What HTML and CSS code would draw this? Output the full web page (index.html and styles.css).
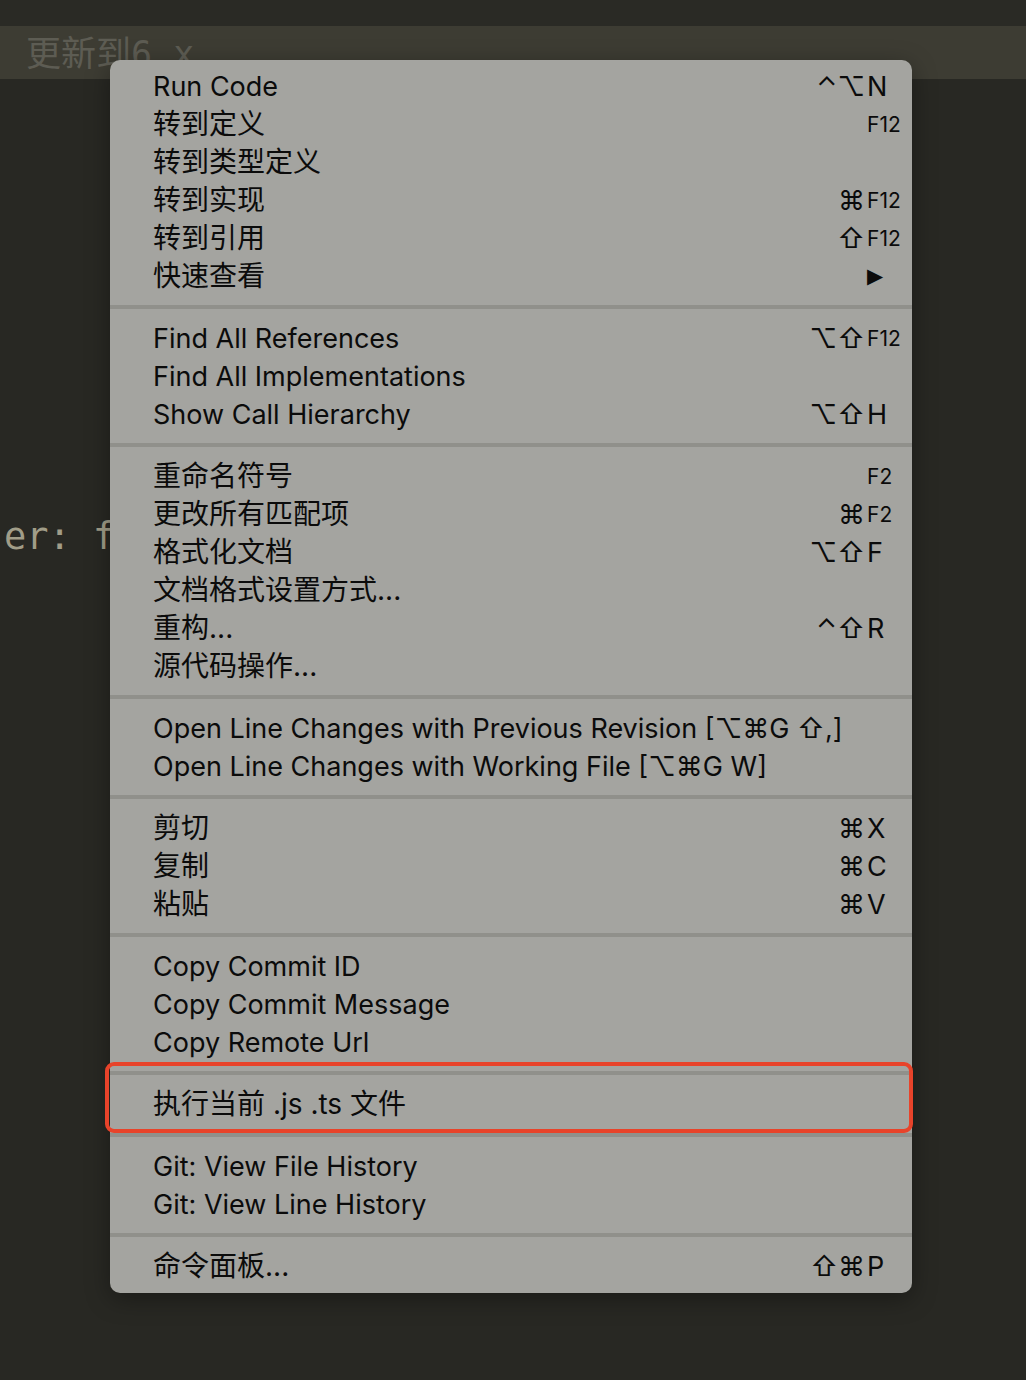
FILE: index.html
```html
<!DOCTYPE html>
<html lang="zh-CN">
<head>
<meta charset="utf-8">
<title>Context menu</title>
<link rel="stylesheet" href="styles.css">
</head>
<body>
<div class="editor">
  <div class="topstrip"></div>
  <div class="line-hl"><span class="ghost">更新到<span class="mono">6.x</span></span></div>
  <div class="gap"></div>
  <div class="code">er: f</div>
</div>

<div class="menu">
  <div class="section">
    <div class="item"><span class="label">Run Code</span><span class="sc"><span class="mods">⌃⌥</span><span class="key">N</span></span></div>
    <div class="item"><span class="label zh">转到定义</span><span class="sc"><span class="mods"></span><span class="key small">F12</span></span></div>
    <div class="item"><span class="label zh">转到类型定义</span></div>
    <div class="item"><span class="label zh">转到实现</span><span class="sc"><span class="mods">⌘</span><span class="key small">F12</span></span></div>
    <div class="item"><span class="label zh">转到引用</span><span class="sc"><span class="mods">⇧</span><span class="key small">F12</span></span></div>
    <div class="item"><span class="label zh">快速查看</span><span class="sc"><span class="mods"></span><span class="key arrow">▶</span></span></div>
  </div>
  <div class="sep"></div>
  <div class="section">
    <div class="item"><span class="label">Find All References</span><span class="sc"><span class="mods">⌥⇧</span><span class="key small">F12</span></span></div>
    <div class="item"><span class="label">Find All Implementations</span></div>
    <div class="item"><span class="label">Show Call Hierarchy</span><span class="sc"><span class="mods">⌥⇧</span><span class="key">H</span></span></div>
  </div>
  <div class="sep"></div>
  <div class="section">
    <div class="item"><span class="label zh">重命名符号</span><span class="sc"><span class="mods"></span><span class="key small">F2</span></span></div>
    <div class="item"><span class="label zh">更改所有匹配项</span><span class="sc"><span class="mods">⌘</span><span class="key small">F2</span></span></div>
    <div class="item"><span class="label zh">格式化文档</span><span class="sc"><span class="mods">⌥⇧</span><span class="key">F</span></span></div>
    <div class="item"><span class="label zh">文档格式设置方式...</span></div>
    <div class="item"><span class="label zh">重构...</span><span class="sc"><span class="mods">⌃⇧</span><span class="key">R</span></span></div>
    <div class="item"><span class="label zh">源代码操作...</span></div>
  </div>
  <div class="sep"></div>
  <div class="section">
    <div class="item"><span class="label">Open Line Changes with Previous Revision [⌥⌘G ⇧,]</span></div>
    <div class="item"><span class="label">Open Line Changes with Working File [⌥⌘G W]</span></div>
  </div>
  <div class="sep"></div>
  <div class="section">
    <div class="item"><span class="label zh">剪切</span><span class="sc"><span class="mods">⌘</span><span class="key">X</span></span></div>
    <div class="item"><span class="label zh">复制</span><span class="sc"><span class="mods">⌘</span><span class="key">C</span></span></div>
    <div class="item"><span class="label zh">粘贴</span><span class="sc"><span class="mods">⌘</span><span class="key">V</span></span></div>
  </div>
  <div class="sep"></div>
  <div class="section">
    <div class="item"><span class="label">Copy Commit ID</span></div>
    <div class="item"><span class="label">Copy Commit Message</span></div>
    <div class="item"><span class="label">Copy Remote Url</span></div>
  </div>
  <div class="sep"></div>
  <div class="section">
    <div class="item"><span class="label zh">执行当前 .js .ts 文件</span></div>
  </div>
  <div class="sep"></div>
  <div class="section">
    <div class="item"><span class="label">Git: View File History</span></div>
    <div class="item"><span class="label">Git: View Line History</span></div>
  </div>
  <div class="sep"></div>
  <div class="section">
    <div class="item"><span class="label zh">命令面板...</span><span class="sc"><span class="mods">⇧⌘</span><span class="key">P</span></span></div>
  </div>
</div>

<div class="callout"></div>
</body>
</html>
```

FILE: styles.css
```css
html, body {
  margin: 0;
  padding: 0;
}
body {
  width: 1026px;
  height: 1380px;
  background: #282823;
  overflow: hidden;
  position: relative;
  font-family: "Inter", "Noto Sans CJK SC", sans-serif;
}
.editor {
  display: flex;
  flex-direction: column;
}
.topstrip {
  height: 26px;
  background: #2a2a25;
}
.line-hl {
  height: 53px;
  background: #3d3c33;
  display: flex;
  align-items: center;
  padding-left: 26px;
}
.ghost {
  font-family: "Noto Sans CJK SC", sans-serif;
  font-size: 35px;
  color: #5d5c53;
  line-height: 1;
}
.ghost .mono {
  font-family: "DejaVu Sans Mono", monospace;
}
.gap {
  height: 436px;
}
.code {
  font-family: "DejaVu Sans Mono", monospace;
  font-size: 37px;
  color: #a19d88;
  padding-left: 4px;
  line-height: 44px;
  white-space: pre;
}

.menu {
  position: absolute;
  left: 110px;
  top: 60px;
  width: 802px;
  padding: 7px 0 8px;
  box-sizing: border-box;
  background: #a4a4a0;
  border-radius: 10px;
  box-shadow: 0 6px 24px rgba(0, 0, 0, 0.35);
  color: #0b0b0b;
}
.section {
  display: flex;
  flex-direction: column;
}
.sep {
  height: 4px;
  margin: 10px 0;
  background: #90908b;
}
.item {
  height: 38px;
  display: flex;
  align-items: center;
  padding-left: 43px;
  padding-right: 10px;
  font-size: 27px;
  white-space: nowrap;
}
.label {
  flex: 1;
}
.label.zh {
  font-size: 28px;
  margin-top: -4px;
}
.sc {
  display: flex;
  align-items: center;
}
.mods {
  text-align: right;
  font-family: "Inter", "DejaVu Sans", sans-serif;
  font-size: 27px;
}
.key {
  width: 35px;
  margin-left: 2px;
  text-align: left;
}
.key.small {
  font-size: 21px;
}
.key.arrow {
  font-family: "DejaVu Sans", sans-serif;
  font-size: 21px;
  margin-left: -4px;
}

.callout {
  position: absolute;
  left: 105px;
  top: 1062px;
  width: 808px;
  height: 71px;
  box-sizing: border-box;
  border: 4px solid #e8432a;
  border-radius: 9px;
}
```
